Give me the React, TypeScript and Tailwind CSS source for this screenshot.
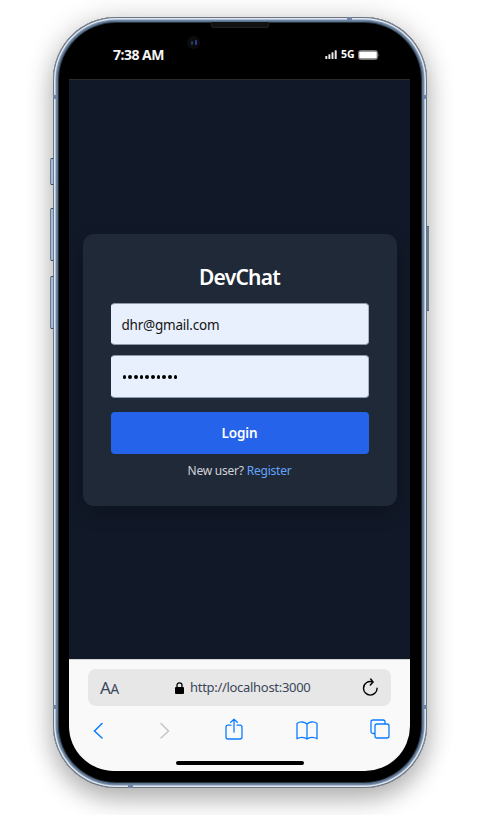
import React from "react";

function StatusBar() {
  return (
    <header className="relative flex h-[62px] items-center justify-between pb-[1px] pl-[44px] pr-[30px] pt-[14px] text-white">
      <span className="text-[14px] font-bold leading-[20px] tracking-[-0.5px] text-[#f4f4f4]">7:38 AM</span>
      <div className="flex h-[18px] items-center gap-[3px]">
        <svg width="13" height="9" viewBox="0 0 13 9" fill="#e8e8e8">
          <rect x="0.3" y="6" width="2" height="3" rx=".5" />
          <rect x="3.4" y="4.3" width="2" height="4.7" rx=".5" />
          <rect x="6.5" y="2.3" width="2" height="6.7" rx=".5" />
          <rect x="9.7" y="0.3" width="2" height="8.7" rx=".5" />
        </svg>
        <span className="w-[14px] whitespace-nowrap text-[10.5px] font-bold leading-none">5G</span>
        <svg width="22" height="10" viewBox="0 0 22 10">
          <rect x=".5" y=".5" width="19" height="9" rx="2" fill="#333" stroke="#777" />
          <rect x="1.2" y="1.5" width="17.6" height="7" rx="1" fill="#fff" />
          <path d="M20.5 3.3Q22 5 20.5 6.7Z" fill="#777" />
        </svg>
      </div>
      <div className="absolute inset-x-0 top-[5px] flex justify-center">
        <div className="h-[6px] w-[58px] rounded-b-[3px] border border-t-0 border-[#202020] bg-[#111]" />
      </div>
      <div className="absolute left-[118px] top-[19px] flex h-[13px] w-[13px] items-center justify-center gap-[2px] rounded-full bg-[#0c0c0e]">
        <span className="h-[4px] w-[2px] rounded-full bg-[#1d4052]" />
        <span className="h-[5px] w-[2px] rounded-full bg-[#30389a]" />
      </div>
    </header>
  );
}

const field = "flex h-[42.5px] shrink-0 items-center rounded-[4px] border border-l-[#e8f0fe] border-r-[#a9b4c5] border-y-[#8e99a9] bg-[#e8f0fe] px-[10px]";

function LoginCard() {
  return (
    <form className="flex h-[272px] w-[314px] flex-col rounded-[11px] bg-[#202937] px-[28px] pb-[18px] pt-[27px] shadow-[0_8px_20px_rgba(0,0,0,0.2)]">
      <h1 className="h-[42px] shrink-0 text-center text-[21px] font-semibold leading-[32px] tracking-[-0.75px] text-white">DevChat</h1>
      <div className="flex flex-col gap-[10px]">
        <div className={`${field} pt-[2px] text-[13.5px] tracking-[-0.22px] text-[#151515]`}>dhr@gmail.com</div>
        <div className={`${field} gap-[2px] pl-[11px] pt-[2px]`}>
          {Array.from({ length: 10 }, (_, i) => <span key={i} className="h-[3.7px] w-[3.7px] rounded-full bg-black" />)}
        </div>
      </div>
      <button type="button" className="mt-[14px] flex h-[42px] shrink-0 items-center justify-center rounded-[4px] bg-[#2563eb] pt-[2px] text-[13.5px] font-semibold tracking-[-0.1px] text-white">Login</button>
      <p className="mt-[7.5px] text-center text-[12px] leading-[20px] tracking-[-0.22px] text-[#d0d4da]">
        New user? <a className="text-[#60a5fa]">Register</a>
      </p>
    </form>
  );
}

function BrowserBar() {
  return (
    <footer className="flex h-[112px] flex-col items-center overflow-hidden rounded-b-[45px] border-t border-[#d3d3d6] bg-[#f9f9f9] pt-[9px]">
      <div className="flex h-[37px] w-[303px] items-center rounded-[8px] bg-[#e7e7e7] px-[12px] text-[#3b465a]">
        <span className="w-[75px] whitespace-nowrap text-[17px] leading-none tracking-[-0.3px]">A<span className="text-[13.5px]">A</span></span>
        <div className="flex flex-1 items-center gap-[6px]">
          <svg width="9" height="12" viewBox="0 0 9 12">
            <path d="M2 5V3.3a2.5 2.5 0 0 1 5 0V5" fill="none" stroke="#000" strokeWidth="1.3" />
            <rect y="5" width="9" height="7" rx="1" fill="#000" />
          </svg>
          <span className="whitespace-nowrap text-[13px] tracking-[-0.3px]">http://localhost:3000</span>
        </div>
        <svg width="17" height="20" viewBox="0 0 17 20" fill="none" stroke="#000" strokeWidth="1.4" strokeLinecap="round" strokeLinejoin="round">
          <path d="M11.200 4.100C5.900 2.200 1.500 5.700 1.500 10.300a6.800 6.800 0 0 0 13.600 0M8.700 1l2.500 3.100-2.900 3" />
        </svg>
      </div>
      <nav className="ml-[23px] mt-[12px] flex h-[24px] items-center gap-[53px] self-start text-[#0a7cff]">
        <svg width="12" height="18" viewBox="0 0 12 18" fill="none" stroke="currentColor" strokeWidth="1.5" strokeLinecap="round"><path d="M10 2.500 2.500 10l7.500 7" /></svg>
        <svg className="ml-[2px]" width="12" height="18" viewBox="0 0 12 18" fill="none" stroke="#c5c5c7" strokeWidth="1.5" strokeLinecap="round"><path d="m2 2.500 7.500 7.500L2 17" /></svg>
        <svg className="ml-[1px]" width="18" height="24" viewBox="0 0 18 24" fill="none" stroke="currentColor" strokeWidth="1.3" strokeLinecap="round" strokeLinejoin="round">
          <path d="M6 7.200H3a2 2 0 0 0-2 2V19a2 2 0 0 0 2 2h12a2 2 0 0 0 2-2V9.200a2 2 0 0 0-2-2h-3M9 14V1.200M5.700 4.300 9 1.200l3.300 3.100" />
        </svg>
        <svg width="22" height="19" viewBox="0 0 22 19" fill="none" stroke="currentColor" strokeWidth="1.300" strokeLinejoin="round">
          <path d="M11 3C8.500.6 4 .2 1 2.500v15.300c3-2 7.500-1.800 10 .2 2.500-2 7-2.200 10-.2V2.500C18 .2 13.500.6 11 3v15" />
        </svg>
        <svg className="-ml-[1px]" width="20" height="22" viewBox="0 0 20 22" fill="none" stroke="currentColor" strokeWidth="1.300">
          <path d="M5 14.500H3a2 2 0 0 1-2-2V3a2 2 0 0 1 2-2h10a2 2 0 0 1 2 2v2" /><rect x="5" y="5" width="14" height="14" rx="2" />
        </svg>
      </nav>
      <div className="mt-[18.500px] h-[4px] w-[128px] rounded-full bg-black" />
    </footer>
  );
}

const sideButton = "border border-[#697a91] border-y-[#34435a] bg-[#a9bbd1]";

export default function App() {
  return (
    <main className="h-[815px] w-[500px] overflow-hidden bg-white pl-[52.5px] pt-[17px] font-['Noto_Sans','Open_Sans',sans-serif]">
      <div className="relative h-[771px] w-[374.5px] rounded-[63px] bg-black pl-[16.500px] pr-[17px] shadow-[0_12px_24px_rgba(0,0,0,0.25),0_0_30px_rgba(0,0,0,0.14),inset_0_0_0_1px_#70747c,inset_0_0_0_2.5px_#dce6f5,inset_0_0_0_3.5px_#8297af,inset_0_0_0_5px_#5b7591,inset_0_0_0_6px_#29323d]">
        <StatusBar />
        <section className="flex h-[580px] items-center justify-center border-t border-[#292b2e] bg-[#111827]">
          <LoginCard />
        </section>
        <BrowserBar />
        <div className="absolute -left-[3px] top-[141px] flex flex-col items-end">
          <i className={`${sideButton} h-[27px] w-[4px] rounded-l-[2px]`} />
          <i className={`${sideButton} mt-[23px] h-[53px] w-[4px] rounded-l-[2px]`} />
          <i className={`${sideButton} mt-[15px] h-[53px] w-[4px] rounded-l-[2px]`} />
        </div>
        <i className={`${sideButton} absolute -right-[2px] top-[209px] h-[85px] w-[2px] rounded-r-[1px]`} />
        <div className="absolute inset-x-0 top-[78px] flex h-[614px] flex-col justify-between">
          <div className="flex justify-between"><i className="h-[4px] w-[4px] bg-[#7184a4]" /><i className="h-[4px] w-[4px] bg-[#7184a4]" /></div>
          <div className="flex justify-between"><i className="h-[4px] w-[4px] bg-[#7184a4]" /><i className="h-[4px] w-[4px] bg-[#7184a4]" /></div>
        </div>
        <i className="absolute right-[75px] top-0 h-[4px] w-[5px] bg-[#7184a4]" />
        <i className="absolute bottom-0 left-[75px] h-[3px] w-[5px] bg-[#7184a4]" />
      </div>
    </main>
  );
}
